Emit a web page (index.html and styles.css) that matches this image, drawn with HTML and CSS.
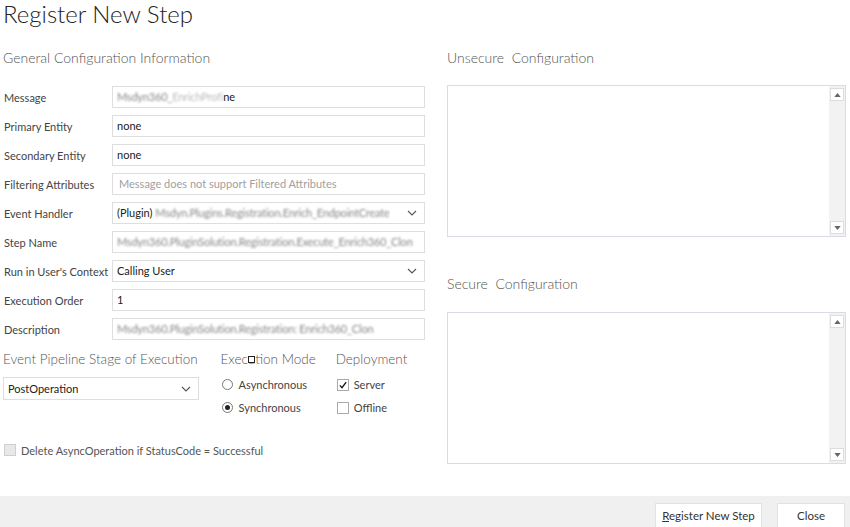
FILE: index.html
```html
<!DOCTYPE html>
<html lang="en">
<head>
<meta charset="utf-8">
<title>Register New Step</title>
<link rel="stylesheet" href="styles.css">
</head>
<body>
<div class="page">
  <h1 class="title">Register New Step</h1>
  <div class="content">
    <div class="left">
      <h2 class="section-title">General Configuration Information</h2>
      <div class="rows">
        <div class="row"><span class="label">Message</span><div class="field"><span class="redact">Msdyn360_</span><span class="redact light">EnrichProfi</span><span>ne</span></div></div>
        <div class="row"><span class="label">Primary Entity</span><div class="field">none</div></div>
        <div class="row"><span class="label">Secondary Entity</span><div class="field">none</div></div>
        <div class="row"><span class="label">Filtering Attributes</span><div class="field placeholder">Message does not support Filtered Attributes</div></div>
        <div class="row"><span class="label">Event Handler</span><div class="field select"><span class="val">(Plugin) <span class="redact">Msdyn.Plugins.Registration.Enrich_EndpointCreate</span></span><svg class="chev" viewBox="0 0 10 6" width="10" height="6"><path d="M1 1l4 4 4-4" fill="none" stroke="#555" stroke-width="1.1"/></svg></div></div>
        <div class="row"><span class="label">Step Name</span><div class="field"><span class="redact">Msdyn360.PluginSolution.Registration.Execute_Enrich360_Clon</span></div></div>
        <div class="row"><span class="label">Run in User's Context</span><div class="field select"><span class="val">Calling User</span><svg class="chev" viewBox="0 0 10 6" width="10" height="6"><path d="M1 1l4 4 4-4" fill="none" stroke="#555" stroke-width="1.1"/></svg></div></div>
        <div class="row"><span class="label">Execution Order</span><div class="field">1</div></div>
        <div class="row"><span class="label">Description</span><div class="field"><span class="redact">Msdyn360.PluginSolution.Registration: Enrich360_Clon</span></div></div>
      </div>
      <div class="stage">
        <div class="stage-col pipeline">
          <h3 class="sub-title">Event Pipeline Stage of Execution</h3>
          <div class="field select stage-select"><span class="val">PostOperation</span><svg class="chev" viewBox="0 0 10 6" width="10" height="6"><path d="M1 1l4 4 4-4" fill="none" stroke="#555" stroke-width="1.1"/></svg></div>
        </div>
        <div class="stage-col mode">
          <h3 class="sub-title cursor-host">Execution Mode<span class="cursor"></span></h3>
          <div class="opts">
            <div class="opt"><span class="radio"></span>Asynchronous</div>
            <div class="opt"><span class="radio on"></span>Synchronous</div>
          </div>
        </div>
        <div class="stage-col deploy">
          <h3 class="sub-title">Deployment</h3>
          <div class="opts">
            <div class="opt"><span class="check"><svg viewBox="0 0 12 12" width="12" height="12"><path d="M2.2 6.4l2.6 2.8 5-6.6" fill="none" stroke="#111" stroke-width="1.6"/></svg></span>Server</div>
            <div class="opt"><span class="check"></span>Offline</div>
          </div>
        </div>
      </div>
      <div class="delete-row"><span class="check disabled"></span>Delete AsyncOperation if StatusCode = Successful</div>
    </div>
    <div class="right">
      <h2 class="section-title">Unsecure&nbsp; Configuration</h2>
      <div class="textbox first">
        <div class="text-area"></div>
        <div class="scrollbar">
          <div class="sb-btn"><svg viewBox="0 0 8 5" width="7" height="4"><path d="M0 5L4 0L8 5Z" fill="#666"/></svg></div>
          <div class="sb-btn"><svg viewBox="0 0 8 5" width="7" height="4"><path d="M0 0L4 5L8 0Z" fill="#666"/></svg></div>
        </div>
      </div>
      <h2 class="section-title secure">Secure&nbsp; Configuration</h2>
      <div class="textbox second">
        <div class="text-area"></div>
        <div class="scrollbar">
          <div class="sb-btn"><svg viewBox="0 0 8 5" width="7" height="4"><path d="M0 5L4 0L8 5Z" fill="#666"/></svg></div>
          <div class="sb-btn"><svg viewBox="0 0 8 5" width="7" height="4"><path d="M0 0L4 5L8 0Z" fill="#666"/></svg></div>
        </div>
      </div>
    </div>
  </div>
  <div class="footer">
    <button class="btn register"><u>R</u>egister New Step</button>
    <button class="btn close">Close</button>
  </div>
</div>
</body>
</html>
```

FILE: styles.css
```css
* { box-sizing: border-box; }
html, body { margin: 0; padding: 0; background: #fff; }
body {
  font-family: Lato, "Open Sans", "Liberation Sans", sans-serif;
  color: #333;
  width: 850px;
  height: 527px;
  overflow: hidden;
}
.page {
  display: flex;
  flex-direction: column;
  height: 527px;
}
.title {
  margin: 0;
  padding-left: 3px;
  font-size: 24px;
  font-weight: 300;
  line-height: 28px;
  height: 28px;
  color: #222;
}
.content {
  flex: 1;
  display: grid;
  grid-template-columns: 422px 399px;
  column-gap: 22px;
  padding-left: 3px;
}
.section-title {
  margin: 15px 0 0;
  height: 30px;
  line-height: 30px;
  font-size: 14px;
  font-weight: 300;
  color: #555;
  white-space: nowrap;
}
.rows {
  margin-top: 13px;
  display: grid;
  row-gap: 7px;
}
.row {
  display: grid;
  grid-template-columns: 109px 313px;
  align-items: center;
  height: 22px;
}
.label {
  padding-left: 1px;
  font-size: 11px;
  color: #444;
  white-space: nowrap;
}
.field {
  height: 22px;
  border: 1px solid #dedede;
  padding: 0 5px 0 4px;
  font-size: 11px;
  line-height: 20px;
  color: #222;
  white-space: nowrap;
  overflow: hidden;
  background: #fff;
}
.field.placeholder { color: #a0a0a0; padding-left: 6px; }
.field.select {
  display: flex;
  align-items: center;
  justify-content: space-between;
}
.field.select .val { overflow: hidden; }
.chev { flex: none; margin-right: 2px; }
.redact {
  color: #888;
  filter: blur(1.3px);
  letter-spacing: -0.2px;
}
.redact.light { color: #bbb; }
.stage {
  margin-top: 9px;
  display: flex;
  height: 70px;
}
.stage-col { display: flex; flex-direction: column; }
.pipeline { width: 197px; }
.mode { width: 116px; margin-left: 22px; }
.deploy { width: 90px; }
.sub-title {
  margin: 0;
  height: 20px;
  line-height: 20px;
  font-size: 13.5px;
  font-weight: 300;
  color: #555;
  white-space: nowrap;
}
.cursor-host { position: relative; }
.cursor {
  position: absolute;
  left: 27px;
  top: 7px;
  width: 7px;
  height: 7px;
  border: 1.5px solid #222;
  background: #fff;
}
.stage-select {
  margin-top: 8px;
  height: 23px;
}
.opts { margin-top: 4px; }
.opt {
  display: flex;
  align-items: center;
  height: 23px;
  font-size: 11px;
  color: #444;
  white-space: nowrap;
}
.radio {
  width: 11px;
  height: 11px;
  border: 1px solid #777;
  border-radius: 50%;
  margin: 0 6px 0 1px;
  position: relative;
  flex: none;
}
.radio.on::after {
  content: "";
  position: absolute;
  left: 2px;
  top: 2px;
  width: 5px;
  height: 5px;
  border-radius: 50%;
  background: #222;
}
.check {
  width: 12px;
  height: 12px;
  border: 1px solid #aaa;
  margin: 0 5px 0 1px;
  display: flex;
  align-items: center;
  justify-content: center;
  flex: none;
  background: #fff;
}
.check svg { display: block; }
.delete-row {
  margin-top: 22px;
  display: flex;
  align-items: center;
  height: 18px;
  font-size: 11px;
  color: #555;
  white-space: nowrap;
}
.check.disabled {
  background: #e8e8e8;
  border-color: #d0d0d0;
  margin: 0 5px 0 1px;
}
.textbox {
  display: flex;
  height: 152px;
  border: 1px solid #d9dde3;
  margin-top: 12px;
}
.textbox.second { margin-top: 13px; }
.section-title.secure { margin-top: 32px; }
.text-area { flex: 1; }
.scrollbar {
  width: 16px;
  background: #f2f2f2;
  display: flex;
  flex-direction: column;
  justify-content: space-between;
  padding: 2px 1px;
}
.sb-btn {
  height: 13px;
  background: #fff;
  border: 1px solid #ddd;
  display: flex;
  align-items: center;
  justify-content: center;
}
.sb-btn svg { display: block; }
.footer {
  height: 31px;
  background: #f0f0f0;
  display: flex;
  justify-content: flex-end;
  align-items: flex-start;
  padding: 7px 5px 0 0;
  gap: 15px;
}
.btn {
  height: 28px;
  background: #fff;
  border: 1px solid #e2e2e2;
  font-family: Lato, "Open Sans", "Liberation Sans", sans-serif;
  font-size: 11.5px;
  color: #333;
  padding: 0 0 4px;
}
.btn.register { width: 107px; }
.btn.close { width: 68px; }
```
